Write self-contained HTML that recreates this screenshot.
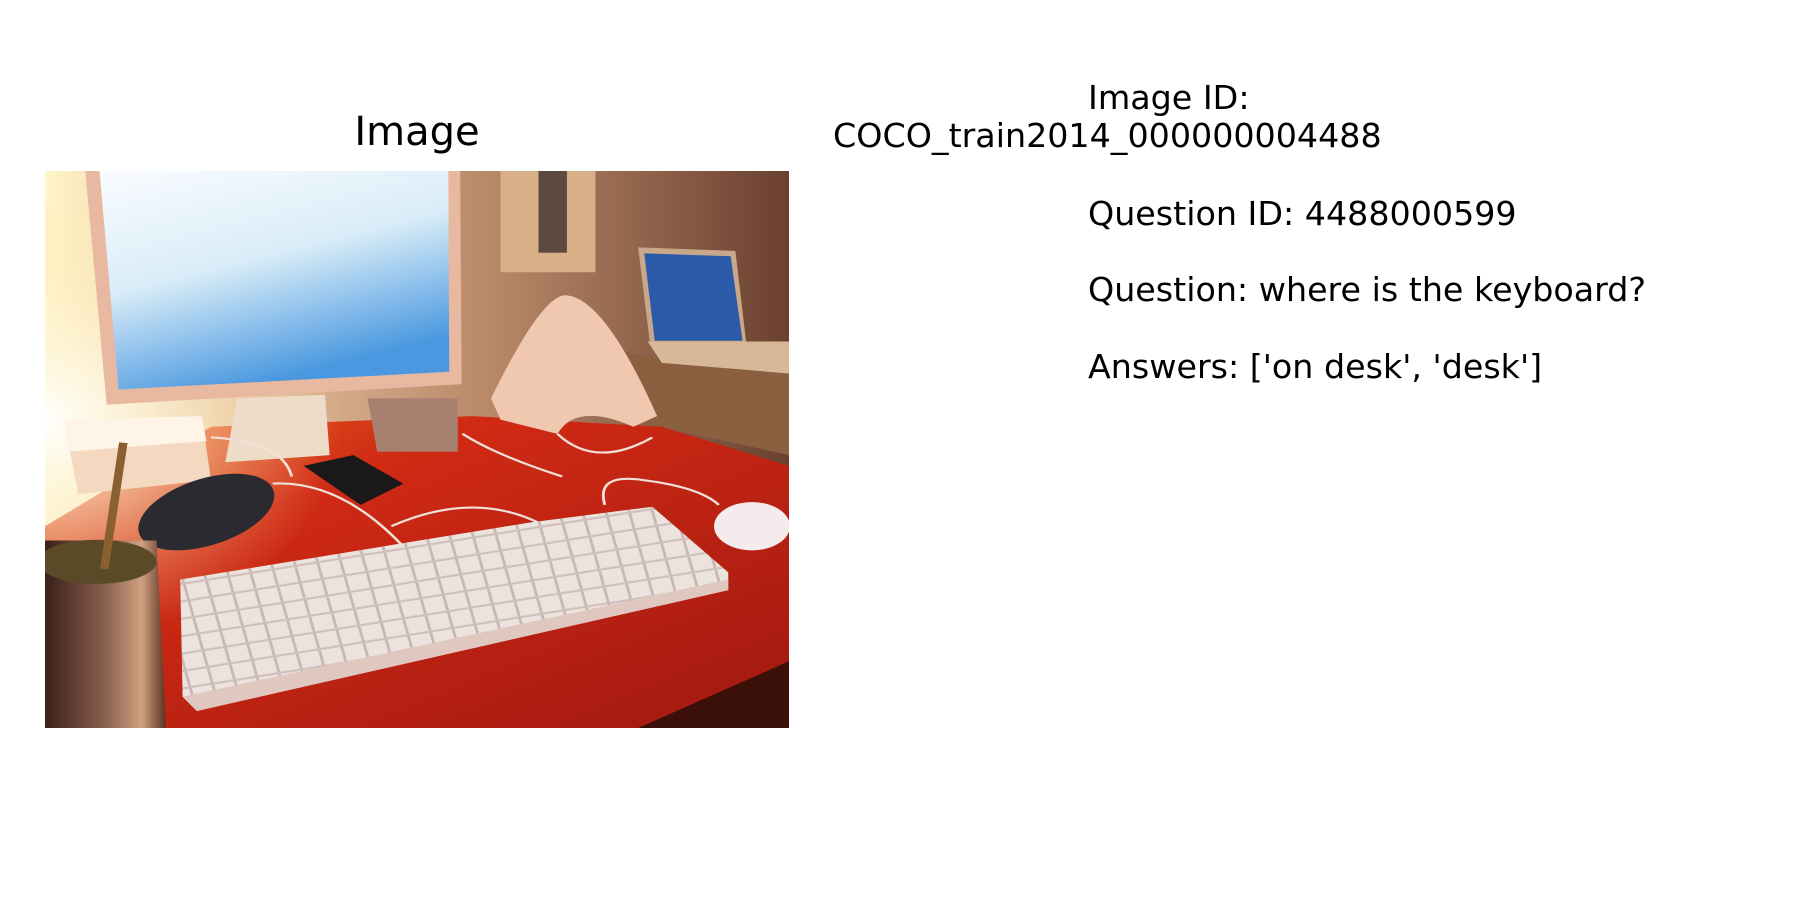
<!DOCTYPE html>
<html><head><meta charset="utf-8"><style>
html,body{margin:0;padding:0;background:#fff;width:1800px;height:900px;overflow:hidden}
svg{display:block}
text{font-family:"DejaVu Sans","Liberation Sans",sans-serif;fill:#000}
</style></head><body>
<svg width="1800" height="900" viewBox="0 0 1800 900" xmlns="http://www.w3.org/2000/svg">
<text x="417" y="145" font-size="40" text-anchor="middle">Image</text>
<text x="1088" y="109" font-size="33.3">Image ID:</text>
<text x="833" y="147" font-size="33.3">COCO_train2014_000000004488</text>
<text x="1088" y="225" font-size="33.3">Question ID: 4488000599</text>
<text x="1088" y="301" font-size="33.3">Question: where is the keyboard?</text>
<text x="1088" y="378" font-size="33.3">Answers: ['on desk', 'desk']</text>
<svg x="45" y="171" width="744" height="557" viewBox="0 0 1568 1568" preserveAspectRatio="none">
<defs>
<linearGradient id="wall" x1="0" y1="0" x2="1" y2="0">
<stop offset="0" stop-color="#fff4c8"/><stop offset="0.3" stop-color="#e0b898"/><stop offset="0.6" stop-color="#b88868"/><stop offset="1" stop-color="#6a4030"/></linearGradient>
<linearGradient id="scr" x1="0" y1="0" x2="0.4" y2="1">
<stop offset="0" stop-color="#fafcff"/><stop offset="0.5" stop-color="#d8ecf8"/><stop offset="1" stop-color="#4a98e0"/></linearGradient>
<linearGradient id="desk" x1="0" y1="0" x2="1" y2="1">
<stop offset="0" stop-color="#e86820"/><stop offset="0.3" stop-color="#d02a14"/><stop offset="1" stop-color="#a01810"/></linearGradient>
<linearGradient id="mate" x1="0" y1="0" x2="1" y2="0">
<stop offset="0" stop-color="#3a2018"/><stop offset="0.5" stop-color="#8a6050"/><stop offset="0.8" stop-color="#d0a080"/><stop offset="1" stop-color="#5a3020"/></linearGradient>
<radialGradient id="glow" cx="0" cy="0.45" r="0.4">
<stop offset="0" stop-color="#ffffff" stop-opacity="0.95"/><stop offset="1" stop-color="#ffe8a0" stop-opacity="0"/></radialGradient>
<pattern id="keys" width="48" height="48" patternUnits="userSpaceOnUse" patternTransform="rotate(-12)">
<rect width="48" height="48" fill="#ece2de"/><rect x="42" width="6" height="48" fill="#c8b8b4"/><rect y="42" width="48" height="6" fill="#d0c0bc"/></pattern>
</defs>
<rect width="1568" height="1568" fill="url(#wall)"/>
<rect x="960" y="0" width="200" height="285" fill="#d8b088"/>
<rect x="1040" y="0" width="60" height="230" fill="#2a2020" opacity="0.7"/>
<polygon points="1220,510 1568,560 1568,800 1230,700" fill="#8a6040"/>
<polygon points="0,1000 350,720 900,690 1300,720 1568,830 1568,1568 0,1568" fill="url(#desk)"/>
<polygon points="1250,1568 1568,1380 1568,1568" fill="#3a1008"/>
<rect width="1568" height="1568" fill="url(#glow)"/>
<polygon points="85,0 875,0 878,600 130,658" fill="#e8b8a0"/>
<polygon points="115,0 850,0 852,565 155,615" fill="url(#scr)"/>
<polygon points="405,640 590,630 600,800 380,820" fill="#ecdcc8"/>
<polygon points="1250,215 1455,225 1478,485 1275,485" fill="#c8a888"/>
<polygon points="1263,232 1445,240 1470,478 1285,478" fill="#2a5aa8"/>
<polygon points="1270,480 1568,480 1568,570 1300,540" fill="#d8b898"/>
<path d="M940,640 Q1050,340 1100,350 Q1180,360 1290,690 L1240,720 Q1120,650 1080,740 L960,700 Z" fill="#f0c8b0"/>
<polygon points="40,700 330,690 350,870 70,910" fill="#f4d8c0"/>
<polygon points="40,700 330,690 340,760 50,790" fill="#fff4e8"/>
<polygon points="680,640 870,640 870,790 700,790" fill="#a88070"/>
<polygon points="545,830 650,800 755,880 665,940" fill="#1a1818"/>
<ellipse cx="340" cy="960" rx="155" ry="90" transform="rotate(-28 340 960)" fill="#2a2a30"/>
<g fill="none" stroke="#f0e0d8" stroke-width="6">
<path d="M480,880 Q620,870 750,1050"/><path d="M730,1000 Q900,900 1040,990"/><path d="M1180,940 Q1160,850 1260,870 Q1380,890 1420,940"/><path d="M880,740 Q950,800 1090,860"/><path d="M1080,740 Q1160,840 1280,750"/><path d="M350,750 Q500,760 520,860"/>
</g>
<polygon points="285,1150 1020,990 1280,945 1440,1130 1440,1180 320,1520 290,1480" fill="url(#keys)"/>
<polygon points="290,1480 1440,1150 1440,1180 320,1520" fill="#e0c8c0"/>
<ellipse cx="1490" cy="1000" rx="80" ry="68" fill="#f4ecec"/>
<polygon points="0,1040 235,1040 255,1568 0,1568" fill="url(#mate)"/>
<ellipse cx="110" cy="1100" rx="125" ry="62" fill="#5a4a28"/>
<line x1="165" y1="765" x2="125" y2="1120" stroke="#8a6030" stroke-width="18"/>
</svg>
</svg>
</body></html>
